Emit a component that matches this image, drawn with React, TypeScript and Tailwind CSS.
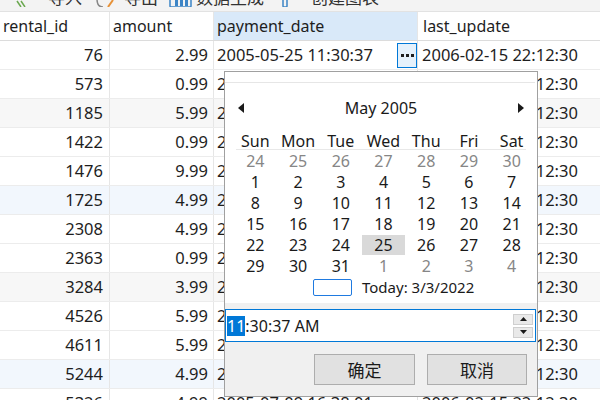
import React from 'react';

const rows: [string, string, string][] = [
  ['76', '2.99', '2005-05-25 11:30:37'],
  ['573', '0.99', '2005-05-28 10:35:23'],
  ['1185', '5.99', '2005-06-15 00:54:12'],
  ['1422', '0.99', '2005-06-15 18:02:53'],
  ['1476', '9.99', '2005-06-15 21:08:46'],
  ['1725', '4.99', '2005-06-16 15:18:57'],
  ['2308', '4.99', '2005-06-18 08:41:48'],
  ['2363', '0.99', '2005-06-18 13:33:59'],
  ['3284', '3.99', '2005-06-21 06:24:45'],
  ['4526', '5.99', '2005-07-08 03:17:05'],
  ['4611', '5.99', '2005-07-08 07:33:56'],
  ['5244', '4.99', '2005-07-09 13:24:07'],
  ['5326', '4.99', '2005-07-09 16:38:01'],
];

const rowBg = (i: number) => {
  if (i === 2 || i === 8) return 'bg-[#f7f7f7]';
  if (i === 5 || i === 11) return 'bg-[#f2f7fd]';
  return 'bg-white';
};

type Day = { d: number; other?: boolean; sel?: boolean };
const weeks: Day[][] = [
  [24, 25, 26, 27, 28, 29, 30].map((d) => ({ d, other: true })),
  [1, 2, 3, 4, 5, 6, 7].map((d) => ({ d })),
  [8, 9, 10, 11, 12, 13, 14].map((d) => ({ d })),
  [15, 16, 17, 18, 19, 20, 21].map((d) => ({ d })),
  [22, 23, 24, 25, 26, 27, 28].map((d) => ({ d, sel: d === 25 })),
  [
    { d: 29 },
    { d: 30 },
    { d: 31 },
    { d: 1, other: true },
    { d: 2, other: true },
    { d: 3, other: true },
    { d: 4, other: true },
  ],
];

const dayNames = ['Sun', 'Mon', 'Tue', 'Wed', 'Thu', 'Fri', 'Sat'];

export default function App() {
  return (
    <div className="relative w-[600px] h-[400px] overflow-hidden bg-white font-['Noto_Sans','Noto_Sans_CJK_SC',sans-serif] text-[#1e1e1e]">
      {/* toolbar (cut off) */}
      <div className="h-[12px] overflow-hidden bg-[#f3f3f3] border-b border-[#e2e2e2]">
        <div className="mt-[-16px] h-[25px] flex items-center pl-[15px] text-[17px] leading-[20px] text-[#333] font-['Noto_Sans_CJK_SC',sans-serif]">
          <svg width="12" height="20" viewBox="0 0 12 20" className="shrink-0">
            <path d="M2 14 L6 20 M6 14 L10 20" stroke="#6aa84f" strokeWidth="1.5" fill="none" />
          </svg>
          <span className="ml-[21px]">导入</span>
          <svg width="21" height="20" viewBox="0 0 21 20" className="ml-[12px] shrink-0">
            <path d="M3 12 Q3 20 9 20" stroke="#888" strokeWidth="1.5" fill="none" />
            <path d="M14 20 L19 13" stroke="#e69138" strokeWidth="2" fill="none" />
          </svg>
          <span className="ml-[9px]">导出</span>
          <svg width="23" height="20" viewBox="0 0 23 20" className="ml-[11px] shrink-0">
            <rect x="1" y="8" width="21" height="12" rx="1" fill="none" stroke="#3d85c6" strokeWidth="1.5" />
            <rect x="6" y="10" width="3" height="9" fill="#3d85c6" />
            <rect x="11" y="12" width="3" height="7" fill="#3d85c6" />
            <rect x="16" y="9" width="3" height="10" fill="#3d85c6" />
          </svg>
          <span className="ml-[4px]">数据生成</span>
          <svg width="8" height="20" viewBox="0 0 8 20" className="ml-[17px] shrink-0">
            <rect x="2" y="10" width="4" height="10" rx="1" fill="none" stroke="#3d85c6" strokeWidth="1.5" />
          </svg>
          <span className="ml-[22px]">创建图表</span>
        </div>
      </div>

      {/* header row */}
      <div className="flex h-[29px] border-b border-[#dcdcdc] text-[16px] leading-none">
        <div className="w-[110px] shrink-0 border-r border-[#e6e6e6] pl-[3px] flex items-center">rental_id</div>
        <div className="w-[104px] shrink-0 border-r border-[#e6e6e6] pl-[3px] flex items-center">amount</div>
        <div className="w-[204px] shrink-0 border-r border-[#e6e6e6] bg-[#d9e9f9] pl-[3px] flex items-center">payment_date</div>
        <div className="flex-1 pl-[5px] flex items-center">last_update</div>
      </div>

      {/* data rows */}
      {rows.map((r, i) => (
        <div key={i} className={`flex h-[29px] border-b border-[#ececec] text-[16.5px] leading-none ${rowBg(i)}`}>
          <div className="w-[110px] shrink-0 border-r border-[#e6e6e6] pr-[6px] flex items-center justify-end">{r[0]}</div>
          <div className="w-[104px] shrink-0 border-r border-[#e6e6e6] pr-[5px] flex items-center justify-end">{r[1]}</div>
          <div className="w-[204px] shrink-0 border-r border-[#e0e0e0] pl-[3px] flex items-center justify-between whitespace-nowrap">
            <span>{r[2]}</span>
            {i === 0 && (
              <div className="w-[20px] h-[25px] border border-[#0078d7] bg-[#e5f1fb] flex items-center justify-center gap-[2px]">
                <span className="w-[3px] h-[3px] bg-[#1e1e1e]" />
                <span className="w-[3px] h-[3px] bg-[#1e1e1e]" />
                <span className="w-[3px] h-[3px] bg-[#1e1e1e]" />
              </div>
            )}
          </div>
          <div className="flex-1 pl-[4px] flex items-center whitespace-nowrap">2006-02-15 22:12:30</div>
        </div>
      ))}

      {/* date-time popup */}
      <div className="absolute left-[224px] top-[71px] w-[314px] h-[326px] border border-[#a0a0a0] bg-[#f0f0f0] flex flex-col">
        <div className="bg-white h-[231px] flex flex-col text-[16px] leading-none">
          <div className="h-[10px]" />
          <div className="h-px bg-[#e6e6e6] mr-[2px]" />
          {/* month header */}
          <div className="h-[49px] flex items-center justify-between px-[13px]">
            <svg width="6" height="10" viewBox="0 0 6 10"><path d="M6 0 L0 5 L6 10 Z" fill="#1a1a1a" /></svg>
            <span className="text-[16px] text-[#1a1a1a]">May 2005</span>
            <svg width="6" height="10" viewBox="0 0 6 10"><path d="M0 0 L6 5 L0 10 Z" fill="#1a1a1a" /></svg>
          </div>
          {/* day names */}
          <div className="ml-[9px] w-[299px] grid grid-cols-7 h-[17px] items-center text-[#1a1a1a]">
            {dayNames.map((n) => (
              <div key={n} className="text-center">{n}</div>
            ))}
          </div>
          <div className="ml-[11px] w-[290px] h-px bg-[#e8e8e8]" />
          {/* days */}
          <div className="ml-[9px] w-[299px] flex flex-col">
            {weeks.map((w, wi) => (
              <div key={wi} className="grid grid-cols-7 h-[21px]">
                {w.map((day, di) => (
                  <div key={di} className="flex items-center justify-center">
                    <div
                      className={`w-[44px] h-[20px] flex items-center justify-center ${day.sel ? 'bg-[#d9d9d9]' : ''} ${day.other ? 'text-[#868686]' : 'text-[#1a1a1a]'}`}
                    >
                      {day.d}
                    </div>
                  </div>
                ))}
              </div>
            ))}
          </div>
          {/* today */}
          <div className="h-[22px] flex items-center pl-[88px] gap-[10px] text-[15px] text-[#1a1a1a]">
            <div className="w-[39px] h-[17px] border border-[#1f7ae0] rounded-[2px]" />
            <span>Today: 3/3/2022</span>
          </div>
        </div>
        <div className="h-[6px]" />
        {/* time field */}
        <div className="w-[311px] h-[33px] border border-[#0078d7] bg-white flex items-center justify-between pl-[1px] pr-[2px]">
          <div className="flex items-center text-[16px] leading-[20px] text-[#1a1a1a]">
            <span className="bg-[#0078d7] text-white">11</span>
            <span>:30:37 AM</span>
          </div>
          <div className="flex flex-col gap-[2px]">
            <div className="w-[20px] h-[11px] bg-[#e9e9e9] border border-[#cfcfcf] flex items-center justify-center">
              <svg width="7" height="4" viewBox="0 0 7 4"><path d="M0 4 L3.5 0 L7 4 Z" fill="#1a1a1a" /></svg>
            </div>
            <div className="w-[20px] h-[11px] bg-[#e9e9e9] border border-[#cfcfcf] flex items-center justify-center">
              <svg width="7" height="4" viewBox="0 0 7 4"><path d="M0 0 L3.5 4 L7 0 Z" fill="#1a1a1a" /></svg>
            </div>
          </div>
        </div>
        {/* buttons */}
        <div className="mt-[12px] flex justify-end gap-[12px] pr-[10px] font-['Noto_Sans_CJK_SC',sans-serif] text-[17px] text-[#1a1a1a]">
          <div className="w-[101px] h-[31px] bg-[#e1e1e1] border border-[#adadad] flex items-center justify-center">确定</div>
          <div className="w-[100px] h-[31px] bg-[#e1e1e1] border border-[#adadad] flex items-center justify-center">取消</div>
        </div>
      </div>
    </div>
  );
}
